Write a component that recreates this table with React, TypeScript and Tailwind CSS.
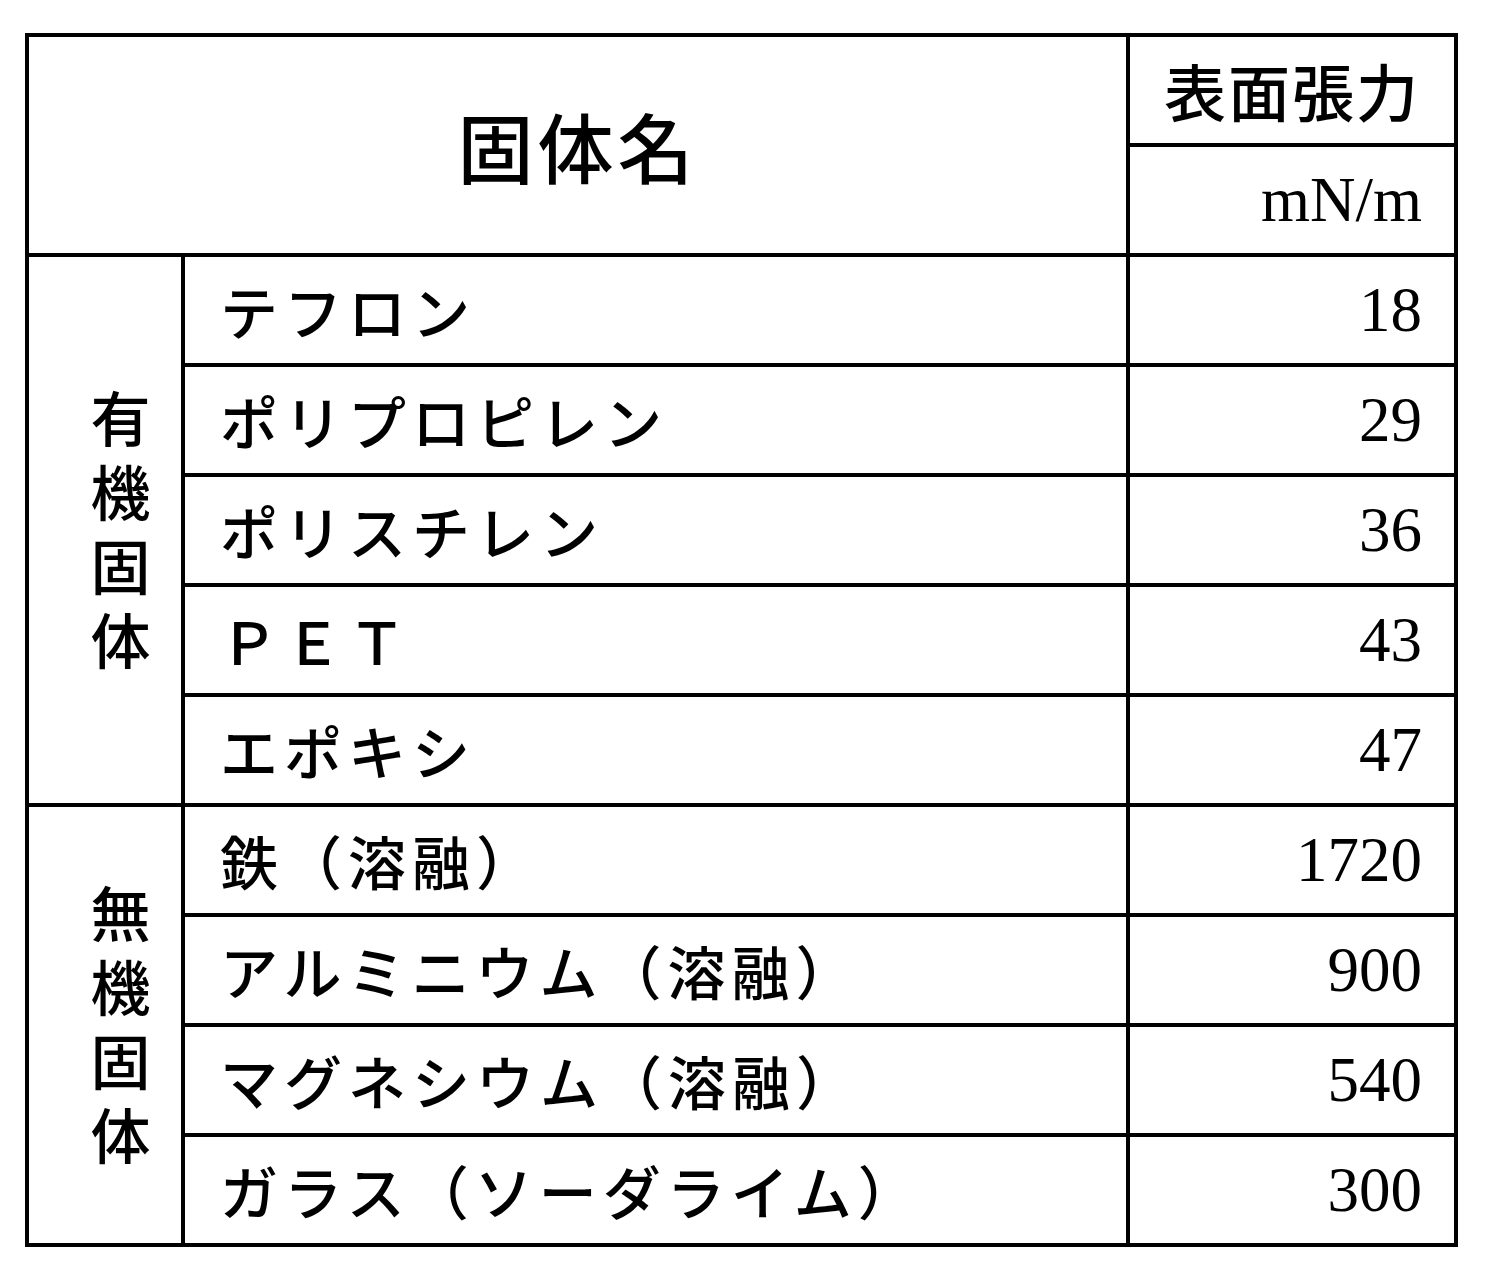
const jp = "font-['Noto_Sans_CJK_JP','Noto_Sans',sans-serif]";
const num = "font-['Liberation_Serif','Times_New_Roman',serif]";

type Row = { name: string; value: string };

const organic: Row[] = [
  { name: 'テフロン', value: '18' },
  { name: 'ポリプロピレン', value: '29' },
  { name: 'ポリスチレン', value: '36' },
  { name: 'ＰＥＴ', value: '43' },
  { name: 'エポキシ', value: '47' },
];

const inorganic: Row[] = [
  { name: '鉄（溶融）', value: '1720' },
  { name: 'アルミニウム（溶融）', value: '900' },
  { name: 'マグネシウム（溶融）', value: '540' },
  { name: 'ガラス（ソーダライム）', value: '300' },
];

// vertical group label (tategaki)
function GroupLabel({ text, rows }: { text: string; rows: 'row-span-5' | 'row-span-4' }) {
  return (
    <div className={`${rows} bg-white flex items-center justify-center pl-[30px] pt-[14px]`}>
      <div className={`${jp} [writing-mode:vertical-rl] text-[60px] leading-none tracking-[14px] font-medium text-black`}>
        {text}
      </div>
    </div>
  );
}

function DataRow({ row }: { row: Row }) {
  return (
    <>
      <div className={`bg-white flex items-center pl-[35px] ${jp} text-[58px] font-medium tracking-[6px] text-black whitespace-nowrap`}>
        {row.name}
      </div>
      <div className={`bg-white flex items-center justify-end pr-[32px] ${num} text-[63px] text-black`}>
        {row.value}
      </div>
    </>
  );
}

export default function App() {
  return (
    <div className="min-h-screen bg-white pt-[33px] pl-[25px]">
      <div className="grid w-fit grid-cols-[152px_941px_324px] grid-rows-[repeat(11,106px)] gap-[4px] bg-black p-[4px]">
        <div className={`col-span-2 row-span-2 bg-white flex items-center justify-center ${jp} text-[76px] font-medium tracking-[4px] text-black`}>
          固体名
        </div>
        <div className={`bg-white flex items-center justify-center ${jp} text-[62px] font-medium tracking-[2px] text-black`}>
          表面張力
        </div>
        <div className={`bg-white flex items-center justify-end pr-[32px] ${num} text-[63px] text-black`}>
          mN/m
        </div>

        <GroupLabel text="有機固体" rows="row-span-5" />
        {organic.map((r) => (
          <DataRow key={r.name} row={r} />
        ))}

        <GroupLabel text="無機固体" rows="row-span-4" />
        {inorganic.map((r) => (
          <DataRow key={r.name} row={r} />
        ))}
      </div>
    </div>
  );
}
